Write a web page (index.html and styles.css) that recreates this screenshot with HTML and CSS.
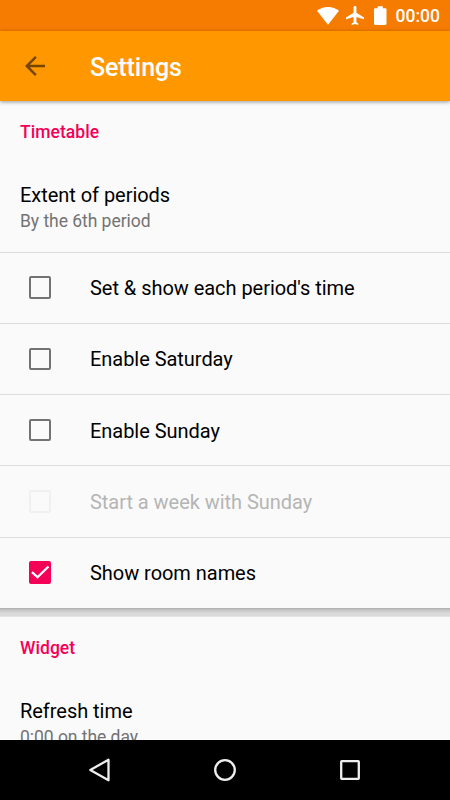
FILE: index.html
```html
<!DOCTYPE html>
<html lang="en">
<head>
<meta charset="utf-8">
<title>Settings</title>
<link rel="stylesheet" href="styles.css">
</head>
<body>
<div class="screen">
  <header class="status-bar">
    <svg class="wifi" viewBox="0 0 22 18"><path d="M0 3.800C3 1.500 6.700 0 11 0s8 1.500 11 3.800L11 17.800z"/></svg>
    <svg class="plane" viewBox="2 2 19 20"><path d="M21 16v-2l-8-5V3.500c0-.83-.67-1.500-1.500-1.500S10 2.670 10 3.500V9l-8 5v2l8-2.500V19l-2 1.500V22l3.500-1 3.500 1v-1.500L13 19v-5.500l8 2.500z"/></svg>
    <svg class="battery" viewBox="0 0 12 18"><path d="M3.500 0h5v2H11q1 0 1 1v14q0 1-1 1H1q-1 0-1-1V3q0-1 1-1h2.500z"/></svg>
    <span class="clock">00:00</span>
  </header>
  <div class="app-bar">
    <svg class="back" viewBox="0 0 24 24"><path d="M20 11H7.830l5.590-5.590L12 4l-8 8 8 8 1.410-1.410L7.830 13H20v-2z"/></svg>
    <h1 class="title">Settings</h1>
  </div>
  <main class="content">
    <section class="card">
      <h2 class="category">Timetable</h2>
      <div class="preference">
        <div class="label">Extent of periods</div>
        <div class="summary">By the 6th period</div>
      </div>
      <div class="row"><span class="box"></span><span class="label">Set &amp; show each period's time</span></div>
      <div class="row"><span class="box"></span><span class="label">Enable Saturday</span></div>
      <div class="row"><span class="box"></span><span class="label">Enable Sunday</span></div>
      <div class="row disabled"><span class="box"></span><span class="label">Start a week with Sunday</span></div>
      <div class="row"><span class="box checked"><svg viewBox="0 0 22 22"><path d="M3 11.200l5.500 5L19.500 5.500"/></svg></span><span class="label">Show room names</span></div>
    </section>
    <div class="gap"></div>
    <section class="card">
      <h2 class="category">Widget</h2>
      <div class="preference">
        <div class="label">Refresh time</div>
        <div class="summary">0:00 on the day</div>
      </div>
    </section>
  </main>
  <nav class="nav-bar">
    <svg viewBox="0 0 24 24"><path d="M2.300 12L20.500 1.700v20.600z"/></svg>
    <svg viewBox="0 0 24 24"><circle cx="12" cy="12" r="9.800"/></svg>
    <svg viewBox="0 0 24 24"><rect x="3.200" y="3.200" width="17.600" height="17.600" rx=".5"/></svg>
  </nav>
</div>
</body>
</html>
```
FILE: styles.css
```css
* { box-sizing: border-box; }
body { margin: 0; font-family: Roboto, sans-serif; }
h1, h2 { margin: 0; font-weight: 500; }

.screen {
  display: flex;
  flex-direction: column;
  width: 450px;
  height: 800px;
  overflow: hidden;
  background: #fafafa;
}

.status-bar {
  display: flex;
  flex: none;
  align-items: center;
  justify-content: flex-end;
  height: 31px;
  padding-right: 10px;
  background: #f57c00;
  color: #fff;
}
.status-bar svg { fill: #fff; }
.wifi { width: 22px; height: 18px; margin-right: 7px; }
.plane { width: 18px; height: 19px; margin-right: 10px; }
.battery { width: 12.5px; height: 19px; margin-right: 9px; }
.clock { font-size: 17.5px; font-weight: 500; line-height: 31px; padding-top: 2px; }

.app-bar {
  position: relative;
  display: flex;
  flex: none;
  align-items: center;
  height: 70px;
  padding-left: 20px;
  background: #ff9800;
  box-shadow: 0 1px 4px rgba(0, 0, 0, .4);
}
.back { width: 30px; height: 30px; fill: #754600; }
.title { margin-left: 40px; padding-top: 4px; font-size: 25px; line-height: 30px; letter-spacing: -.08px; color: #fff; }

.content { flex: 1; min-height: 0; overflow: hidden; }
.category {
  height: 60.5px;
  padding: 20px 20px 0;
  font-size: 17.5px;
  line-height: 22px;
  letter-spacing: .05px;
  color: #f50057;
}
.preference { height: 90px; padding: 20.5px 20px 0; }
.label { font-size: 20px; line-height: 26px; letter-spacing: -.04px; color: #000; }
.summary { padding-top: 1px; font-size: 17.5px; line-height: 24px; letter-spacing: -.04px; color: #737373; }

.row {
  display: flex;
  align-items: center;
  height: 71.25px;
  padding-left: 28.5px;
  border-top: 1px solid #dcdcdc;
}
.row .label { margin-left: 39px; padding-top: 1px; }
.box {
  display: block;
  width: 22.5px;
  height: 22.5px;
  border: 2px solid #737373;
  border-radius: 2px;
}
.disabled .box { border-color: #f0f0f0; }
.disabled .label { color: #b5b5b5; }
.checked { border: 0; background: #f50057; }
.checked svg { display: block; width: 22px; height: 22px; fill: none; stroke: #fff; stroke-width: 2.3; }

.gap {
  height: 9.5px;
  background: linear-gradient(#adadad, #c8c8c8 25%, #dadada 60%, #dadada 85%, #e9e9e9);
}

.nav-bar {
  display: flex;
  flex: none;
  align-items: center;
  justify-content: center;
  gap: 101px;
  height: 60px;
  background: #000;
}
.nav-bar svg { width: 24px; height: 24px; fill: none; stroke: #eee; stroke-width: 2.3; stroke-linejoin: round; }
```
